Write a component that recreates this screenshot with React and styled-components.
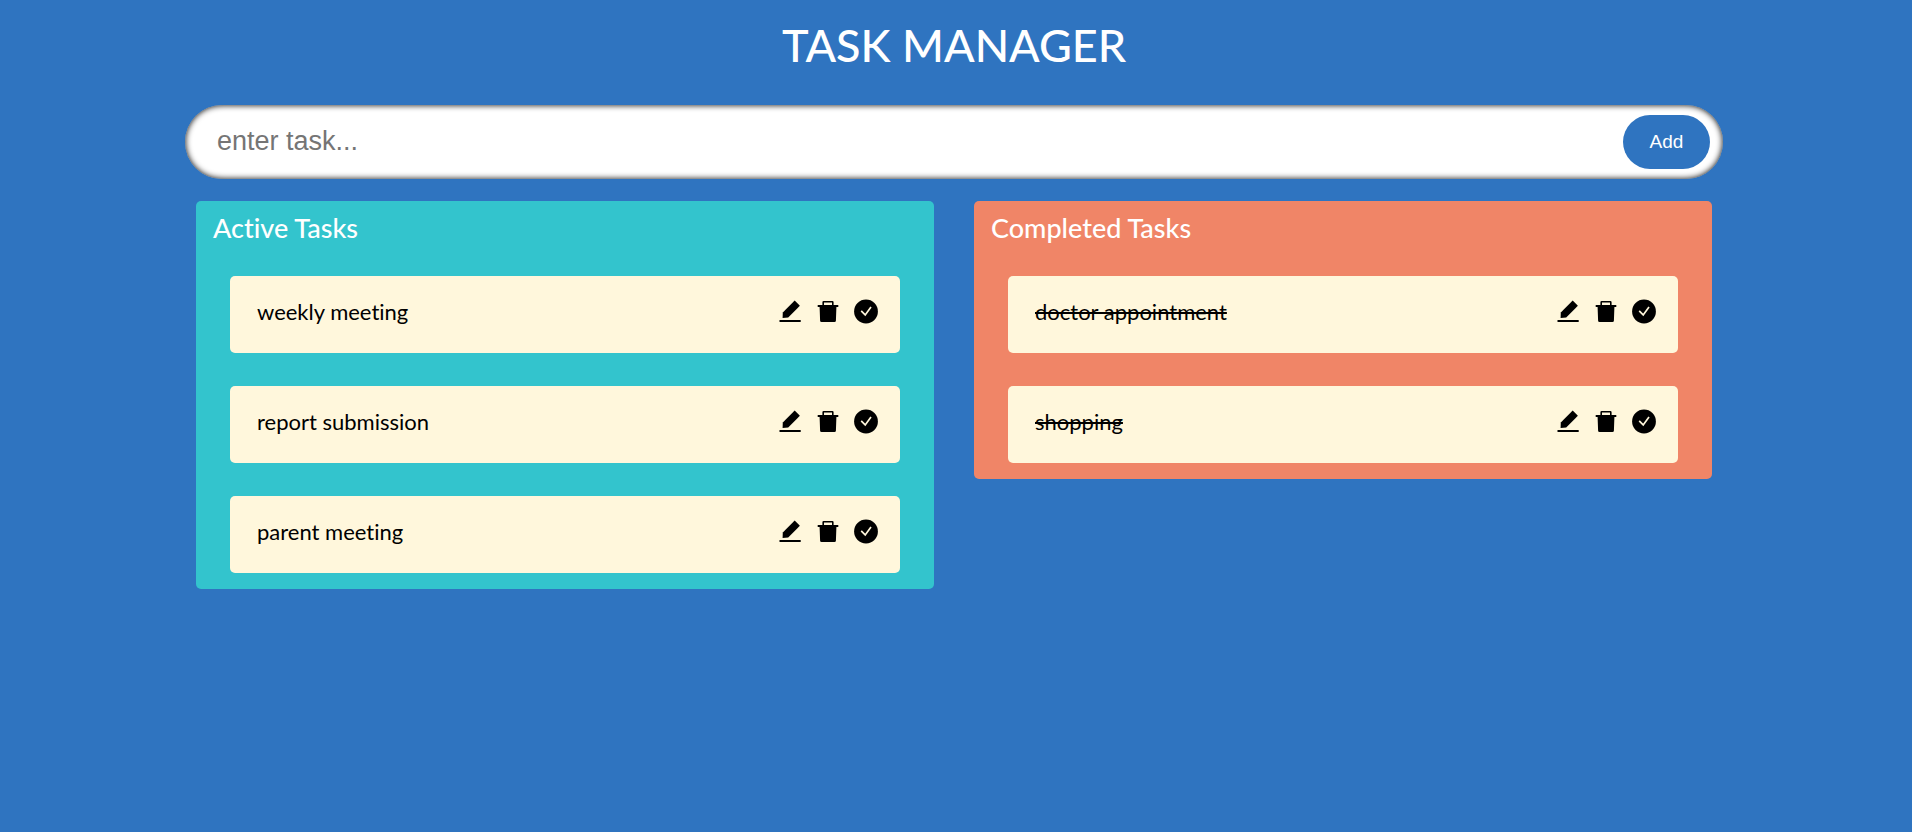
import React, { useState } from "react";
import styled, { createGlobalStyle } from "styled-components";

const GlobalStyle = createGlobalStyle`
  * { box-sizing: border-box; }
  body {
    margin: 0;
    background: #2f74c0;
    font-family: Lato, "Liberation Sans", sans-serif;
    font-variant-ligatures: none;
  }
`;

const Page = styled.main`
  min-height: 100vh;
  padding-right: 4px;
  display: flex;
  flex-direction: column;
  align-items: center;
`;

const Title = styled.h1`
  margin: 18px 0 0;
  font-size: 45px;
  line-height: 54px;
  font-weight: 500;
  color: #fff;
  text-transform: uppercase;
`;

const TaskForm = styled.form`
  width: calc(100% - 370px);
  min-width: 320px;
  height: 74px;
  margin: 33px 0 22px;
  padding: 0 13px 0 32px;
  display: flex;
  align-items: center;
  background: #fff;
  border-radius: 50px;
  box-shadow: inset 0 0 6px #000;
`;

const TaskInput = styled.input`
  flex: 1;
  min-width: 0;
  padding: 0 0 2px;
  border: none;
  outline: none;
  background: transparent;
  font: 27px "Liberation Sans", Arial, sans-serif;

  &::placeholder { color: #757575; opacity: 1; }
`;

const AddButton = styled.button`
  width: 87px;
  height: 54px;
  padding: 0;
  border: none;
  border-radius: 50px;
  background: #2f74c0;
  color: #fff;
  font: 19px "Liberation Sans", Arial, sans-serif;
  cursor: pointer;
`;

const Board = styled.div`
  width: calc(100% - 392px);
  min-width: 300px;
  display: flex;
  align-items: flex-start;
  gap: 40px;
`;

const Panel = styled.section`
  flex: 1;
  padding: 11px 34px 16px;
  border-radius: 5px;
  background: ${(p) => p.$color};
`;

const PanelTitle = styled.h2`
  margin: 0 -17px 32px;
  font-size: 27px;
  line-height: 32px;
  font-weight: 500;
  color: #fff;
`;

const TaskList = styled.ul`
  margin: 0;
  padding: 0;
  list-style: none;
  display: flex;
  flex-direction: column;
  gap: 33px;
`;

const TaskCard = styled.li`
  height: 77px;
  padding: 0 21px 6px 27px;
  display: flex;
  align-items: center;
  justify-content: space-between;
  border-radius: 5px;
  background: #fff7dc;
`;

const TaskText = styled.span`
  font-size: 22px;
  line-height: 28px;
  color: #000;
  text-decoration: ${(p) => (p.$done ? "line-through 2px" : "none")};
`;

const Actions = styled.div`
  display: flex;
  gap: 12px;
  margin-bottom: 2px;
`;

const IconButton = styled.button`
  width: 26px;
  height: 26px;
  padding: 0;
  border: none;
  background: none;
  color: #000;
  cursor: pointer;

  svg { display: block; }
`;

const EditIcon = () => (
  <svg width="26" height="26" viewBox="0 0 26 26" fill="currentColor" aria-hidden="true">
    <path d="M17.7 2.6 22.9 7.8 11.2 19.4 5.6 20 5.8 14.4Z" />
    <path d="M2.5 22h21.2v2H2.5z" />
  </svg>
);

const TrashIcon = () => (
  <svg width="26" height="26" viewBox="0 0 26 26" fill="currentColor" aria-hidden="true">
    <path fillRule="evenodd" d="M8.6 3h8.8q1.2 0 1.2 1.2V7h4.7v1.9H21.4l-.5 13.8q-.1 1.4-1.4 1.4H6.5q-1.3 0-1.4-1.4L4.6 8.9H2.7V7h4.7V4.2Q7.4 3 8.6 3Zm.4 1.6V7h8V4.6Z" />
  </svg>
);

const CheckIcon = () => (
  <svg width="26" height="26" viewBox="0 0 26 26" aria-hidden="true">
    <circle cx="13" cy="13.5" r="11.9" fill="currentColor" />
    <path d="m8.2 12.9 4 4 5.8-8" fill="none" stroke="#fff7dc" strokeWidth="1.7" />
  </svg>
);

function TaskPanel({ title, color, tasks, done }) {
  return (
    <Panel $color={color}>
      <PanelTitle>{title}</PanelTitle>
      <TaskList>
        {tasks.map((task) => (
          <TaskCard key={task}>
            <TaskText $done={done}>{task}</TaskText>
            <Actions>
              <IconButton type="button" aria-label="Edit"><EditIcon /></IconButton>
              <IconButton type="button" aria-label="Delete"><TrashIcon /></IconButton>
              <IconButton type="button" aria-label="Complete"><CheckIcon /></IconButton>
            </Actions>
          </TaskCard>
        ))}
      </TaskList>
    </Panel>
  );
}

export default function App() {
  const [draft, setDraft] = useState("");
  const [active, setActive] = useState(["weekly meeting", "report submission", "parent meeting"]);

  const addTask = (event) => {
    event.preventDefault();
    if (draft.trim()) {
      setActive([...active, draft.trim()]);
      setDraft("");
    }
  };

  return (
    <>
      <GlobalStyle />
      <Page>
        <Title>Task Manager</Title>
        <TaskForm onSubmit={addTask}>
          <TaskInput
            aria-label="Task"
            placeholder="enter task..."
            value={draft}
            onChange={(event) => setDraft(event.target.value)}
          />
          <AddButton type="submit">Add</AddButton>
        </TaskForm>
        <Board>
          <TaskPanel title="Active Tasks" color="#33c4cd" tasks={active} />
          <TaskPanel title="Completed Tasks" color="#f08567" tasks={["doctor appointment", "shopping"]} done />
        </Board>
      </Page>
    </>
  );
}
